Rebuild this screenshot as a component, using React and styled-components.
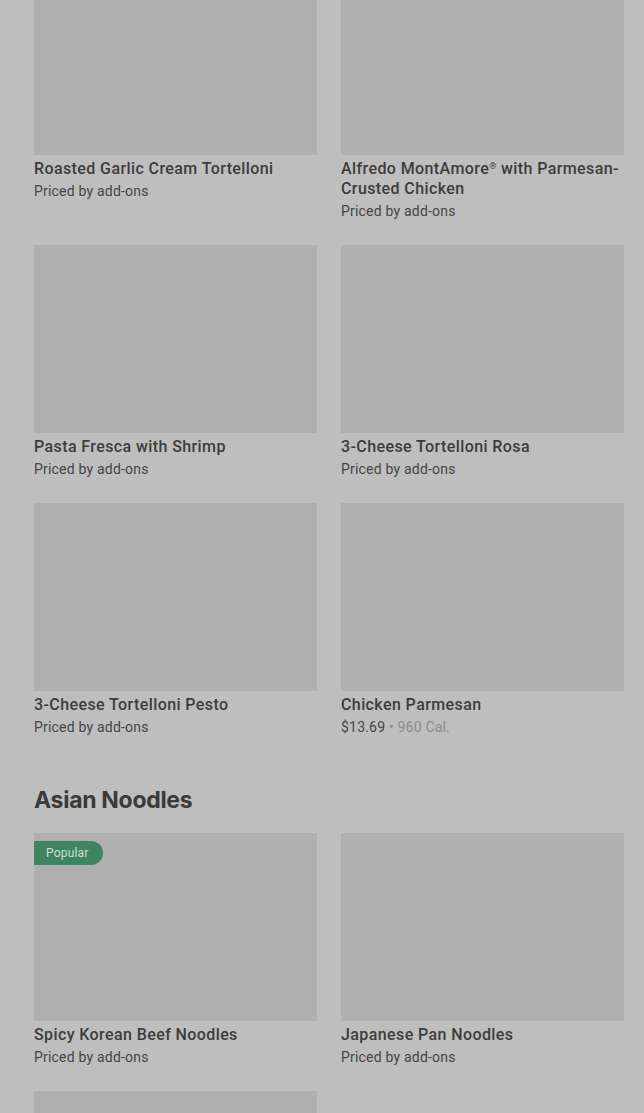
import React from "react";
import styled, { createGlobalStyle } from "styled-components";

const Global = createGlobalStyle`
  html, body { margin: 0; padding: 0; background: #bebebe; }
  body { font-family: "Roboto", "Inter", sans-serif; overflow: hidden; }
`;

const Page = styled.div`
  width: 644px;
  height: 1113px;
  overflow: hidden;
  background: #bebebe;
`;

const Inner = styled.div`
  margin-top: -33px;
  padding: 0 20px 0 34px;
`;

const Grid = styled.div`
  display: grid;
  grid-template-columns: 283px 283px;
  column-gap: 24px;
  row-gap: 24px;
`;

const Card = styled.div`
  display: flex;
  flex-direction: column;
`;

const Thumb = styled.div`
  position: relative;
  height: 188px;
  background: #afafaf;
`;

const Badge = styled.span`
  position: absolute;
  top: 8px;
  left: 0;
  height: 24px;
  padding: 0 14px 0 12px;
  display: flex;
  align-items: center;
  background: #3d8561;
  color: #cde0d4;
  font-size: 12px;
  letter-spacing: 0.2px;
  border-radius: 0 12px 12px 0;
`;

const Title = styled.div`
  margin-top: 4px;
  font-size: 16px;
  line-height: 20px;
  font-weight: 500;
  letter-spacing: 0.4px;
  color: #3c3c3c;
`;

const Reg = styled.span`
  display: inline-block;
  font-size: 9px;
  line-height: 12px;
  vertical-align: top;
  margin-top: 1px;
`;

const Sub = styled.div`
  margin-top: 2px;
  font-size: 14px;
  line-height: 20px;
  letter-spacing: 0.2px;
  color: #454545;
`;

const Cal = styled.span`
  color: #8c8c8c;
`;

const Heading = styled.h2`
  margin: 47px 0 17px;
  font-family: "Inter", sans-serif;
  font-size: 23px;
  line-height: 32px;
  font-weight: 700;
  letter-spacing: -0.3px;
  color: #3a3a3a;
`;

const Item = ({ title, sub, price, cal, badge }) => (
  <Card>
    <Thumb>{badge && <Badge>{badge}</Badge>}</Thumb>
    <Title>{title}</Title>
    <Sub>
      {price ? (
        <>
          {price}
          <Cal> • {cal}</Cal>
        </>
      ) : (
        sub
      )}
    </Sub>
  </Card>
);

const pasta = [
  { title: "Roasted Garlic Cream Tortelloni", sub: "Priced by add-ons" },
  {
    title: (
      <>
        <span>Alfredo MontAmore</span>
        <Reg>®</Reg>
        <span> with Parmesan-</span>
        <span>Crusted Chicken</span>
      </>
    ),
    sub: "Priced by add-ons",
  },
  { title: "Pasta Fresca with Shrimp", sub: "Priced by add-ons" },
  { title: "3-Cheese Tortelloni Rosa", sub: "Priced by add-ons" },
  { title: "3-Cheese Tortelloni Pesto", sub: "Priced by add-ons" },
  { title: "Chicken Parmesan", price: "$13.69", cal: "960 Cal." },
];

const noodles = [
  { title: "Spicy Korean Beef Noodles", sub: "Priced by add-ons", badge: "Popular" },
  { title: "Japanese Pan Noodles", sub: "Priced by add-ons" },
  { title: "", sub: "" },
];

export default function App() {
  return (
    <Page>
      <Global />
      <Inner>
        <Grid>
          {pasta.map((p, i) => (
            <Item key={i} {...p} />
          ))}
        </Grid>
        <Heading>Asian Noodles</Heading>
        <Grid>
          {noodles.map((p, i) => (
            <Item key={i} {...p} />
          ))}
        </Grid>
      </Inner>
    </Page>
  );
}
